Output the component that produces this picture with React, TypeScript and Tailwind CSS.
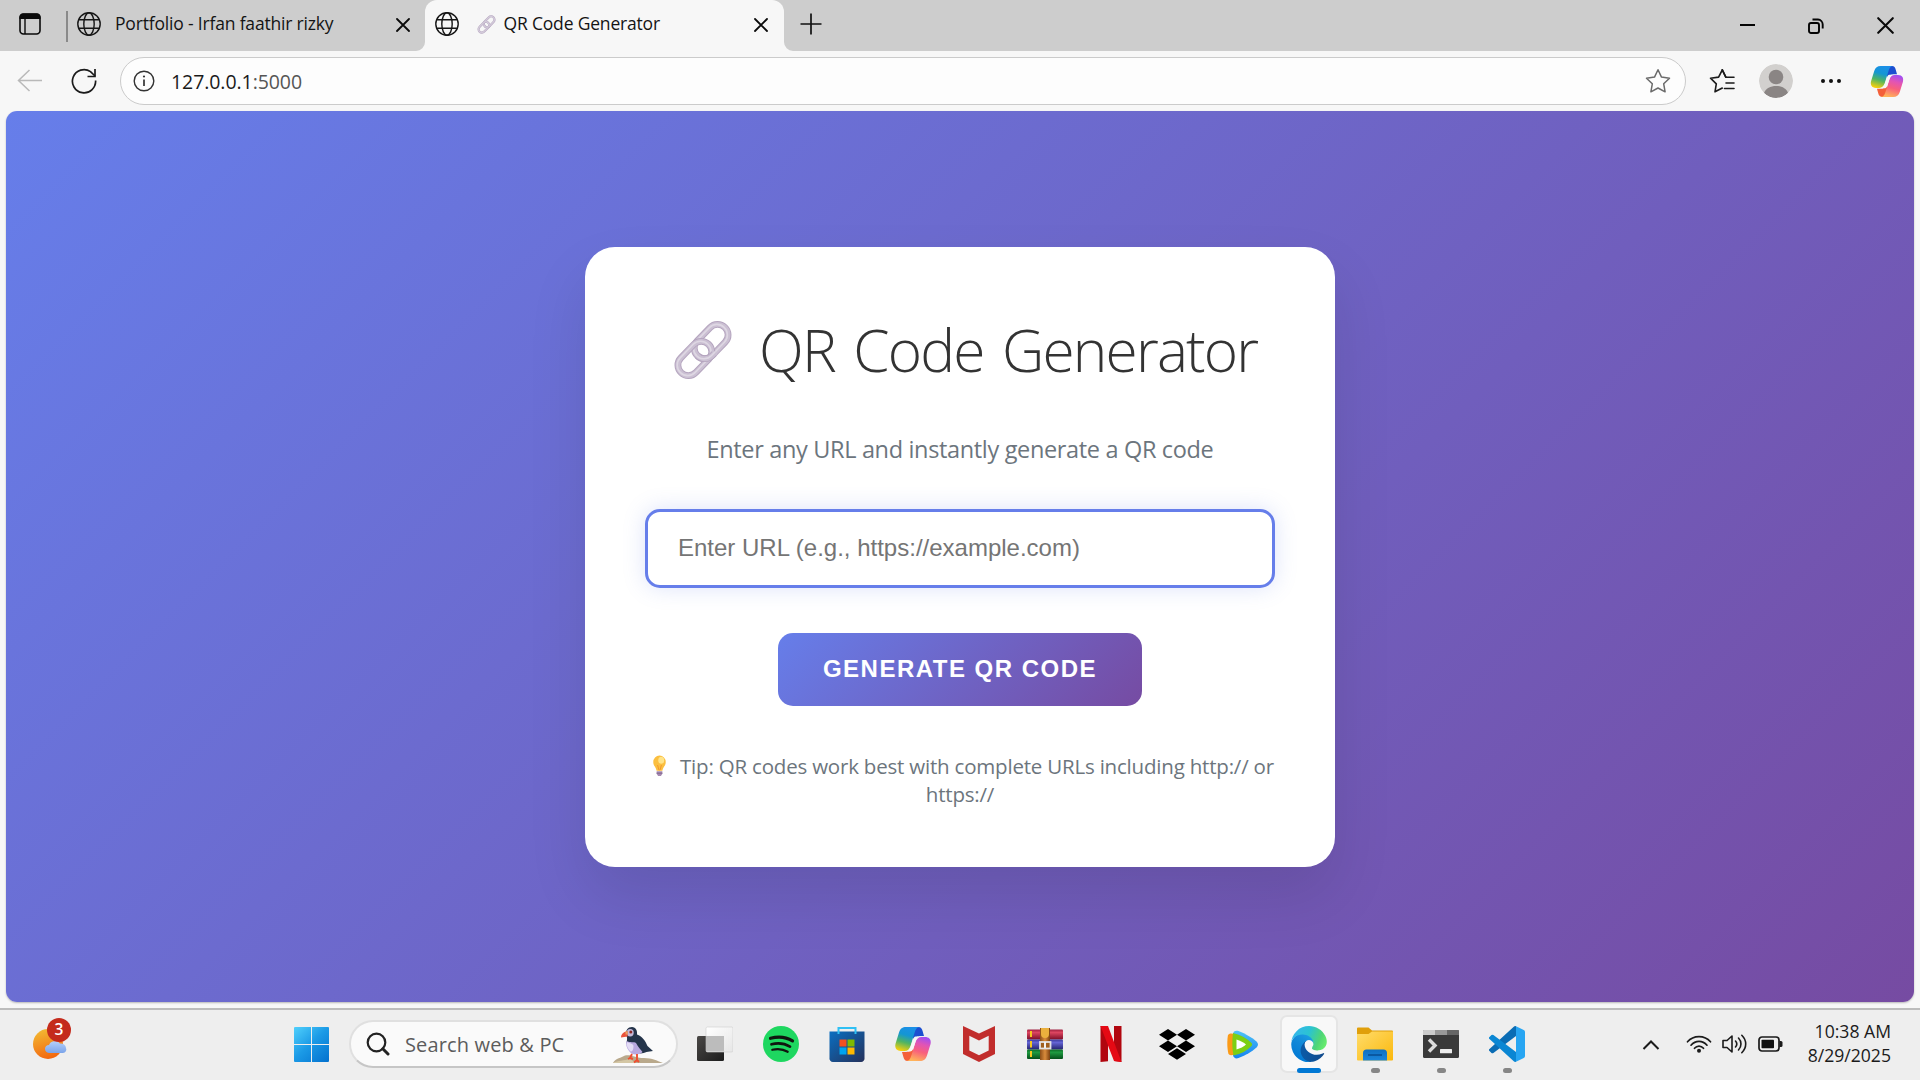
import React, { useId } from "react";

function Globe() {
  return (
    <svg className="h-6 w-6 shrink-0" viewBox="0 0 24 24" fill="none" stroke="#161616" strokeWidth="1.4">
      <circle cx="12" cy="12" r="11.2" />
      <ellipse cx="12" cy="12" rx="5.2" ry="11.2" />
      <path d="M2 7.7H22M2 16.3H22" />
    </svg>
  );
}

function Cross({ className, w = 1.8 }: { className: string; w?: number }) {
  return (
    <svg className={className} viewBox="0 0 14 14" fill="none" stroke="#0a0a0a" strokeWidth={w}>
      <path d="M1 1L13 13M13 1L1 13" strokeLinecap="round" />
    </svg>
  );
}

function LinkEmoji({ className }: { className: string }) {
  return (
    <svg className={className} viewBox="0 0 60 60" fill="none">
      <g transform="rotate(-46 30 30)">
        <rect x="22" y="19.5" width="39.5" height="21" rx="10.5" stroke="#b5a5bf" strokeWidth="6.8" />
        <rect x="22" y="19.5" width="39.5" height="21" rx="10.5" stroke="#cbc0d3" strokeWidth="4.8" />
        <rect x="21.5" y="19" width="39.5" height="21" rx="10.5" stroke="#ded7e3" strokeWidth="1.6" />
        <rect x="-1.5" y="19.5" width="39.5" height="21" rx="10.5" stroke="#b5a5bf" strokeWidth="6.8" />
        <rect x="-1.5" y="19.5" width="39.5" height="21" rx="10.5" stroke="#cbc0d3" strokeWidth="4.8" />
        <rect x="-2" y="19" width="39.5" height="21" rx="10.5" stroke="#ded7e3" strokeWidth="1.6" />
        <path d="M22 30A10.5 10.5 0 0 0 32.5 40.5H35" stroke="#b5a5bf" strokeWidth="6.8" />
        <path d="M22 29A10.5 10.5 0 0 0 32.5 40.5H37" stroke="#cbc0d3" strokeWidth="4.8" />
        <path d="M21.5 28A10.5 10.5 0 0 0 32 40H37" stroke="#ded7e3" strokeWidth="1.6" />
      </g>
    </svg>
  );
}

function Copilot({ className }: { className: string }) {
  const id = useId();
  const top = "M11 0H25C21.500 0 20.500 3 19.500 6L15.500 19C14.500 22 12.500 24 9.500 24H6C1 24-.5 20.500.6 16.500L4 5.500C5.200 1.600 7.500 0 11 0Z";
  const fold = "M18 0H23.500C26 0 27 1.800 27.600 4L29 9H26C22 9 20.500 10 19 13L17 9Z";
  return (
    <svg className={className} viewBox="0 0 36 34">
      <defs>
        <linearGradient id={id + "a"} x1="0.6" y1="0" x2="0.3" y2="1">
          <stop offset="0" stopColor="#1b8fe8" />
          <stop offset=".35" stopColor="#1496d3" />
          <stop offset=".65" stopColor="#4fb463" />
          <stop offset="1" stopColor="#f6cf0b" />
        </linearGradient>
        <linearGradient id={id + "b"} x1="0.6" y1="0" x2="0.3" y2="1">
          <stop offset="0" stopColor="#ffb45a" />
          <stop offset=".4" stopColor="#f8607c" />
          <stop offset=".7" stopColor="#e254b4" />
          <stop offset="1" stopColor="#a24ef2" />
        </linearGradient>
      </defs>
      <path d={fold} fill="#1c4fd0" />
      <path d={fold} fill="#f4603a" transform="rotate(180 18 17)" />
      <path d={top} fill={`url(#${id}a)`} />
      <path d={top} fill={`url(#${id}b)`} transform="rotate(180 18 17)" />
      <path d="M20.500 9.500H23.500C22 10.500 21.500 12 21 13.500L18.500 21C17.700 23.500 16.500 24.500 15 24.500H12.500C14 23.500 14.800 22 15.500 20L18 12.500C18.600 10.700 19.300 9.800 20.500 9.500Z" fill="#f7f7f7" />
    </svg>
  );
}

function TabStrip() {
  return (
    <div className="flex h-[51px] items-stretch bg-[#cdcdcd]">
      <div className="flex w-[425px] items-center pb-[3px]">
        <svg className="ml-[19px] h-[22px] w-[22px]" viewBox="0 0 22 22" fill="none">
          <rect x="1" y="1" width="20" height="20" rx="3.500" stroke="#0a0a0a" strokeWidth="1.600" />
          <path d="M.5 6V4A3.500 3.500 0 0 1 4 .5H18A3.500 3.500 0 0 1 21.500 4V6Z" fill="#0a0a0a" />
          <path d="M6 6V21" stroke="#0a0a0a" strokeWidth="1.400" />
        </svg>
        <div className="mt-[5px] ml-[25px] h-[31px] w-[2px] bg-[#8a8a8a]" />
        <div className="ml-[9px] flex">
          <Globe />
        </div>
        <span className="ml-[14px] flex-1 pb-[1px] text-[17.5px] tracking-[-0.18px] whitespace-nowrap text-[#141414]">Portfolio - Irfan faathir rizky</span>
        <Cross className="mt-[2px] mr-[15px] h-[14px] w-[14px]" />
      </div>
      <div className="relative flex w-[359px] items-center rounded-t-[12px] bg-[#f7f7f7] pb-[3px]">
        <svg className="absolute bottom-0 -left-[9px] h-[9px] w-[9px]" viewBox="0 0 9 9">
          <path d="M9 0V9H0A9 9 0 0 0 9 0Z" fill="#f7f7f7" />
        </svg>
        <svg className="absolute -right-[9px] bottom-0 h-[9px] w-[9px]" viewBox="0 0 9 9">
          <path d="M0 0V9H9A9 9 0 0 1 0 0Z" fill="#f7f7f7" />
        </svg>
        <div className="ml-[10px] flex">
          <Globe />
        </div>
        <LinkEmoji className="ml-[18px] h-[19px] w-[19px]" />
        <span className="ml-[7.5px] flex-1 pb-[1px] text-[17.5px] tracking-[-0.18px] whitespace-nowrap text-[#141414]">QR Code Generator</span>
        <Cross className="mt-[2px] mr-[16px] h-[14px] w-[14px]" />
      </div>
      <div className="flex flex-1 items-center pb-[2px]">
        <svg className="mb-[2px] ml-[16px] h-[22px] w-[22px]" viewBox="0 0 22 22" stroke="#111" strokeWidth="1.700">
          <path d="M11 .5V21.500M.5 11H21.500" />
        </svg>
        <div className="flex-1" />
        <div className="mr-[53px] h-[2px] w-[15px] bg-[#050505]" />
        <svg className="mt-[2px] mr-[53px] h-[16px] w-[16px]" viewBox="0 0 16 16" fill="none" stroke="#050505" strokeWidth="1.900">
          <rect x="1" y="5" width="10" height="10" rx="2" />
          <path d="M4.500 1.500H10A5 5 0 0 1 14.700 6.500V10.500" />
        </svg>
        <Cross className="mt-[2px] mr-[26px] h-[17px] w-[17px]" w={1.7} />
      </div>
    </div>
  );
}

function Toolbar() {
  return (
    <div className="flex h-[60px] items-center bg-[#f7f7f7]">
      <svg className="ml-[17px] h-[24px] w-[25px]" viewBox="0 0 25 24" fill="none" stroke="#b9b9b9" strokeWidth="1.500">
        <path d="M25 11.500H1.500M12.500 1L1.500 11.500L12.500 22" />
      </svg>
      <svg className="ml-[29px] h-[26px] w-[26px]" viewBox="0 0 26 26" fill="none" stroke="#1b1b1b" strokeWidth="1.700">
        <path d="M24.600 12.500A11.600 11.600 0 1 1 19.500 3.600L24 8" />
        <path d="M24 1V8.500H16.500" />
      </svg>
      <div className="ml-[23px] flex h-[48px] w-[1566px] items-center rounded-full border border-[#cbcbcb] bg-[#fdfdfd]">
        <svg className="ml-[12px] h-[22px] w-[22px]" viewBox="0 0 22 22" fill="none" stroke="#333" strokeWidth="1.400">
          <circle cx="11" cy="11" r="9.800" />
          <path d="M11 9.500V16" strokeWidth="1.700" />
          <circle cx="11" cy="6.500" r="1.100" fill="#333" stroke="none" />
        </svg>
        <span className="ml-[16px] flex-1 pt-[1px] text-[19.5px] tracking-[-0.07px] whitespace-nowrap text-[#1a1a1a]">
          127.0.0.1<span className="text-[#555]">:5000</span>
        </span>
        <svg className="mr-[14px] h-[26px] w-[26px]" viewBox="0 0 26 26" fill="none" stroke="#6b6b6b" strokeWidth="1.500" strokeLinejoin="round">
          <path d="M13 1.800L16.500 9.100L24.500 10.200L18.700 15.800L20.100 23.800L13 20L5.900 23.800L7.300 15.800L1.500 10.200L9.500 9.100Z" />
        </svg>
      </div>
      <svg className="ml-[23px] h-[26px] w-[26px]" viewBox="0 0 26 26" fill="none" stroke="#1b1b1b" strokeWidth="1.600" strokeLinejoin="round" strokeLinecap="round">
        <path d="M16.800 9.200L13.300 1.800L9.600 9.100L1.500 10.200L7.300 15.800L6 23.800L13.300 20" />
        <path d="M13.300 1.800L16.800 9.200H25M17 15H25M15.500 20.500H25" />
      </svg>
      <svg className="ml-[24px] h-[34px] w-[34px] rounded-full" viewBox="0 0 34 34">
        <circle cx="17" cy="17" r="17" fill="#d2d0ce" />
        <circle cx="17" cy="13" r="7.300" fill="#8a8584" />
        <path d="M5 29C8 19.500 26 19.500 29 29A17 17 0 0 1 5 29Z" fill="#8a8584" />
      </svg>
      <div className="ml-[28px] flex gap-[4px]">
        <i className="h-[4px] w-[4px] rounded-full bg-[#111]" />
        <i className="h-[4px] w-[4px] rounded-full bg-[#111]" />
        <i className="h-[4px] w-[4px] rounded-full bg-[#111]" />
      </div>
      <Copilot className="ml-[29px] h-[31px] w-[34px]" />
    </div>
  );
}

function Card() {
  return (
    <main className="mt-[136px] flex h-[620px] w-[750px] flex-col items-center rounded-[30px] bg-white px-[60px] pt-[60px] shadow-[0_30px_60px_rgba(0,0,0,0.1)]">
      <h1 className="flex h-[85px] w-full items-center gap-[26px] pl-[28px] text-[58.5px] font-light tracking-[-1.8px] whitespace-nowrap text-[#333] [word-spacing:5px]">
        <LinkEmoji className="h-[60px] w-[60px] shrink-0" />
        QR Code Generator
      </h1>
      <p className="mt-[39px] h-[36px] text-[23.5px] leading-[36px] tracking-[-0.34px] whitespace-nowrap text-[#6c757d]">Enter any URL and instantly generate a QR code</p>
      <input
        className="mt-[42px] h-[79px] w-[630px] rounded-[15px] border-[3px] border-[#667eea] bg-white px-[30px] pb-[2px] font-['Liberation_Sans',sans-serif] text-[24px] shadow-[0_0_22px_rgba(102,126,234,0.22)] outline-none placeholder:text-[#757575]"
        placeholder="Enter URL (e.g., https://example.com)"
      />
      <button className="mt-[45px] h-[73px] w-[364px] rounded-[15px] bg-[linear-gradient(135deg,#667eea_0%,#764ba2_100%)] pb-[2px] font-['Liberation_Sans',sans-serif] text-[24px] font-bold tracking-[1.5px] whitespace-nowrap text-white">
        GENERATE QR CODE
      </button>
      <div className="mt-[46px] w-full text-[20.5px] leading-[28px] tracking-[-0.2px] text-[#6c757d]">
        <p className="flex items-center whitespace-nowrap">
          <svg className="ml-[6px] h-[22px] w-[17px] shrink-0" viewBox="0 0 17 23">
            <path d="M8.500 .5A6.500 6.800 0 0 0 2 7.500C2 11 4.700 12.500 5.500 16.500H11.500C12.300 12.500 15 11 15 7.500A6.500 6.800 0 0 0 8.500 .5Z" fill="#fbbf3f" />
            <ellipse cx="10.300" cy="5.500" rx="3.100" ry="3.700" fill="#ffe48a" />
            <path d="M6.500 10.500L8 16M10.500 10.500L9 16" stroke="#f0942d" strokeWidth="1" fill="none" />
            <path d="M5.500 17H11.500V19.500L10 22H7L5.500 19.500Z" fill="#a58ab0" />
            <path d="M5.500 19H11.500" stroke="#7d6490" strokeWidth="1" />
          </svg>
          <span className="ml-[12px]">Tip: QR codes work best with complete URLs including http:// or</span>
        </p>
        <p className="text-center">https://</p>
      </div>
    </main>
  );
}

function Puffin() {
  return (
    <svg className="h-[38px] w-[52px]" viewBox="0 0 52 38">
      <path d="M1 37C4 32 9 32 13 29.500C19 28 24 32 32 32C40 32 46 35 51 37Z" fill="#b9a98c" />
      <path d="M1 37C6 34 12 35 18 33L24 37Z" fill="#d4c7a5" />
      <path d="M14.500 10C13 4 16 1 20 1C24 1 25.500 5 25 8.500C30 10 33.500 15 35.500 20L41 25L34.500 26C32 27 29 28 26 27L15 18C14 16 16 13 14.500 10Z" fill="#24344a" />
      <path d="M14.500 15C18 17 22 15.500 24 17C26 21 29 24 30.500 26C28 29 20 30 17 25C14.500 22 13.500 18 14.500 15Z" fill="#b9a9e0" />
      <path d="M15 16C18 18 21 17 21.500 20C21.500 24 20 26 18.500 25.500C15.500 22.500 14 19 15 16Z" fill="#e3dcf5" />
      <ellipse cx="18.200" cy="6.700" rx="3.500" ry="3.700" fill="#c3b8d8" />
      <circle cx="18.800" cy="6" r="1.500" fill="#8b2b28" />
      <path d="M15.500 5C11 6 9 8.500 9 11.500L15.500 10.500Z" fill="#e9533c" />
      <path d="M15.500 5L13.500 5.800V8.500L15.500 8.500Z" fill="#e9a25c" />
      <path d="M20 28L18 32L16 33M18 32L21 33M25 28L25 34L22 36.500M25 34L27 36" stroke="#ee4f32" strokeWidth="1.900" fill="none" />
    </svg>
  );
}

function TaskView() {
  return (
    <svg className="h-[36px] w-[36px]" viewBox="0 0 36 36">
      <defs>
        <linearGradient id="tv" x1="0" y1="0" x2="1" y2="1">
          <stop offset="0" stopColor="#4a4846" />
          <stop offset="1" stopColor="#1c1c1c" />
        </linearGradient>
        <linearGradient id="tw" x1="0" y1="0" x2="1" y2="1">
          <stop offset="0" stopColor="#fff" />
          <stop offset="1" stopColor="#e6e6e6" />
        </linearGradient>
      </defs>
      <rect x="0" y="10" width="27" height="25" rx="1.500" fill="url(#tv)" />
      <rect x="9" y="1" width="27" height="25" rx="1.500" fill="url(#tw)" stroke="#cfcfcf" strokeWidth=".6" />
      <path d="M9 10H27V25.500H10A1 1 0 0 1 9 24.500Z" fill="#bcbcbc" />
    </svg>
  );
}

function Spotify() {
  return (
    <svg className="h-[36px] w-[36px]" viewBox="0 0 36 36" fill="none" stroke="#10150f" strokeLinecap="round">
      <circle cx="18" cy="18" r="18" fill="#1ed760" stroke="none" />
      <path d="M7.500 12.300C15 10.300 23.500 11.200 29.500 14.900" strokeWidth="3.200" />
      <path d="M8.500 18.300C15 16.500 21.500 17.300 27 20.600" strokeWidth="2.700" />
      <path d="M9.300 23.800C15 22.500 20 23 24.700 25.800" strokeWidth="2.200" />
    </svg>
  );
}

function Store() {
  return (
    <svg className="h-[36px] w-[36px]" viewBox="0 0 36 36">
      <defs>
        <linearGradient id="st" x1="0" y1="0" x2="1" y2="1">
          <stop offset="0" stopColor="#0a6fc2" />
          <stop offset="1" stopColor="#25315b" />
        </linearGradient>
      </defs>
      <path d="M.5 5.500H35.500V32A3.500 3.500 0 0 1 32 36H4A3.500 3.500 0 0 1 .5 32Z" fill="url(#st)" />
      <path d="M9.500 8V2H26.500V8" fill="none" stroke="#2fc0f4" strokeWidth="2" />
      <path d="M10.500 13.500H17.500V20.500H10.500Z" fill="#f25022" />
      <path d="M18.500 13.500H25.500V20.500H18.500Z" fill="#7fba00" />
      <path d="M10.500 21.500H17.500V28.500H10.500Z" fill="#00a4ef" />
      <path d="M18.500 21.500H25.500V28.500H18.500Z" fill="#ffb900" />
    </svg>
  );
}

function McAfee() {
  return (
    <svg className="h-[36px] w-[32px]" viewBox="0 0 32 36">
      <path d="M0 0L16 7.500L32 0V28L16 36L0 28ZM6.300 9.700V24.500L16 29.200L25.700 24.500V9.700L16 14.500Z" fill="#c12d2c" fillRule="evenodd" />
    </svg>
  );
}

function WinRar() {
  return (
    <svg className="h-[32px] w-[36px]" viewBox="0 0 36 32">
      <defs>
        <linearGradient id="w1" x1="0" y1="0" x2="0" y2="1">
          <stop offset="0" stopColor="#a02040" />
          <stop offset=".3" stopColor="#dc4560" />
          <stop offset="1" stopColor="#7d0e28" />
        </linearGradient>
        <linearGradient id="w2" x1="0" y1="0" x2="0" y2="1">
          <stop offset="0" stopColor="#3a3a9c" />
          <stop offset=".3" stopColor="#6464d4" />
          <stop offset="1" stopColor="#24246f" />
        </linearGradient>
        <linearGradient id="w3" x1="0" y1="0" x2="0" y2="1">
          <stop offset="0" stopColor="#0c6a26" />
          <stop offset=".3" stopColor="#1e9a40" />
          <stop offset="1" stopColor="#05501a" />
        </linearGradient>
        <linearGradient id="w4" x1="0" y1="0" x2="1" y2="0">
          <stop offset="0" stopColor="#8c4e17" />
          <stop offset=".5" stopColor="#d98c3c" />
          <stop offset="1" stopColor="#7a4010" />
        </linearGradient>
      </defs>
      <rect x="0" y="1.500" width="36" height="10" rx="1" fill="url(#w1)" />
      <rect x="0" y="11.500" width="36" height="10" rx="1" fill="url(#w2)" />
      <rect x="0" y="21.500" width="36" height="9.500" rx="1" fill="url(#w3)" />
      <path d="M3 3H5V9H3ZM3 13H5V19.500H3ZM3 23H5V29H3Z" fill="#f6c71d" />
      <rect x="13" y="0" width="10" height="32" fill="url(#w4)" />
      <path d="M14 0H22V6A4 4 0 0 1 14 6Z" fill="#eab03d" />
      <rect x="13" y="14" width="10.500" height="6.500" fill="#a1601f" stroke="#e4e4e4" strokeWidth="1.800" />
      <path d="M18 14V20" stroke="#f2f2f2" strokeWidth="2" />
    </svg>
  );
}

function Netflix() {
  return (
    <svg className="h-[36px] w-[22px]" viewBox="0 0 22 36">
      <path d="M.5 0H8V35.300L.5 36ZM14 0H21.500V36L14 35Z" fill="#b1060f" />
      <path d="M.5 0H8L21.500 36C19 35.500 16.500 35.200 14 35Z" fill="#e50914" />
    </svg>
  );
}

function Dropbox() {
  return (
    <svg className="h-[31px] w-[36px]" viewBox="0 0 36 31" fill="#000">
      <path d="M9 0L18 5.700L9 11.400L0 5.700ZM27 0L36 5.700L27 11.400L18 5.700ZM9 11.600L18 17.300L9 23L0 17.300ZM27 11.600L36 17.300L27 23L18 17.300ZM18 19.300L27 25L18 30.700L9 25Z" />
    </svg>
  );
}

function TencentVideo() {
  return (
    <svg className="h-[29px] w-[32px]" viewBox="0 0 32 29">
      <defs>
        <linearGradient id="tc" x1="0" y1="0" x2="0" y2="1">
          <stop offset="0" stopColor="#4fc3f7" />
          <stop offset="1" stopColor="#1583f0" />
        </linearGradient>
      </defs>
      <path d="M6 4C6 1 9 0 11.500 1C19 4 25 7.500 29.500 11.500C31.500 13.500 31.500 15.500 29.500 17.500C25 21.500 19 25 11.500 28C9 29 6.500 28 6 25Z" fill="url(#tc)" />
      <path d="M1 5C3 3 5 3.500 7 4V24.500C5 25.500 3 25.500 1.500 24C0 18 0 10 1 5Z" fill="#fb9a17" />
      <path d="M6 3C14 5 20 8.500 24.500 13C25.300 14 25.300 15 24.500 16C20 20.500 14 24 6.500 25.500C5 18 5 11 6 3Z" fill="#7ccf13" />
      <path d="M9.500 9.500C13 10.500 17 12.500 19 14.500C17 16.500 13 18.500 9.500 19.500Z" fill="#fff" />
    </svg>
  );
}

function Edge() {
  return (
    <svg className="h-[36px] w-[36px]" viewBox="4 0 257 259">
      <defs>
        <linearGradient id="e1" x1=".2" y1="0" x2="1" y2="0">
          <stop offset="0" stopColor="#0c59a4" />
          <stop offset="1" stopColor="#114a8b" />
        </linearGradient>
        <linearGradient id="e2" x1=".8" y1=".1" x2=".3" y2="1">
          <stop offset="0" stopColor="#1b9de2" />
          <stop offset=".4" stopColor="#1188d8" />
          <stop offset="1" stopColor="#0078d4" />
        </linearGradient>
        <linearGradient id="e3" x1="0" y1=".3" x2="1" y2=".6">
          <stop offset="0" stopColor="#35b5ee" />
          <stop offset=".45" stopColor="#2bc3d2" />
          <stop offset=".8" stopColor="#4fd675" />
          <stop offset="1" stopColor="#66eb6e" />
        </linearGradient>
      </defs>
      <path d="M235.680 195.460a93.730 93.730 0 01-10.540 4.710 101.870 101.870 0 01-35.900 6.460c-47.320 0-88.540-32.550-88.540-74.320A31.480 31.480 0 01117.130 105c-42.800 1.800-53.800 46.400-53.800 72.530 0 73.880 68.090 81.370 82.760 81.370 7.910 0 19.840-2.300 27-4.560l1.310-.44a128.340 128.340 0 0066.600-52.800 4 4 0 00-5.320-5.640z" fill="url(#e1)" />
      <path d="M110.340 246.340A79.200 79.200 0 0187.600 225a80.720 80.720 0 0129.530-120c3.120-1.470 8.450-4.130 15.540-4a32.350 32.350 0 0125.690 13 31.880 31.880 0 016.360 18.660c0-.21 24.460-79.600-80-79.600-43.900 0-80 41.660-80 78.210a130.150 130.150 0 0012.110 56 128 128 0 00156.380 67.110 75.550 75.550 0 01-62.780-8z" fill="url(#e2)" />
      <path d="M156.940 153.750c-.81 1.050-3.300 2.500-3.300 5.660 0 2.610 1.700 5.120 4.720 7.230 14.380 10 41.490 8.680 41.560 8.680a59.560 59.560 0 0030.270-8.350 61.380 61.380 0 0030.430-52.880c.26-22.410-8-37.310-11.340-43.910C228.090 28.760 182.350.25 132.610.25a128 128 0 00-128 126.200c.48-36.540 36.800-66.050 80-66.050 3.500 0 23.460.34 42 10.070 16.340 8.580 24.900 18.940 30.850 29.210 6.180 10.670 7.280 24.150 7.280 29.520s-2.740 13.330-7.800 19.550z" fill="url(#e3)" />
    </svg>
  );
}

function Folder() {
  return (
    <svg className="h-[34px] w-[36px]" viewBox="0 0 36 34">
      <defs>
        <linearGradient id="fo" x1="0" y1="0" x2="1" y2="1">
          <stop offset="0" stopColor="#ffdc6b" />
          <stop offset="1" stopColor="#fbb80c" />
        </linearGradient>
        <linearGradient id="fb" x1="0" y1="0" x2="0" y2="1">
          <stop offset="0" stopColor="#0f6fc0" />
          <stop offset="1" stopColor="#1b86dc" />
        </linearGradient>
      </defs>
      <path d="M0 1.500A1 1 0 0 1 1 .5H11.500L15 3.500H35A1 1 0 0 1 36 4.500V12H0Z" fill="#e09f0b" />
      <path d="M0 7H11.500L15 4.500H36V32A1 1 0 0 1 35 33.500H1A1 1 0 0 1 0 32Z" fill="url(#fo)" />
      <path d="M6 33.500V26A3.500 3.500 0 0 1 9.500 22.500H26.500A3.500 3.500 0 0 1 30 26V33.500Z" fill="url(#fb)" />
      <path d="M11 28H25" stroke="#0a559c" strokeWidth="1.800" />
    </svg>
  );
}

function Terminal() {
  return (
    <svg className="h-[28px] w-[36px]" viewBox="0 0 36 28">
      <rect width="36" height="28" rx="1.500" fill="#3a3a3a" />
      <path d="M1 0H12V5H0V1A1 1 0 0 1 1 0Z" fill="#cccccc" />
      <path d="M12 0H24V5H12Z" fill="#999" />
      <path d="M24 0H35A1 1 0 0 1 36 1V5H24Z" fill="#666" />
      <path d="M6 9.500L12 15.500L6 21.500" stroke="#dcdcdc" strokeWidth="3.400" fill="none" />
      <rect x="17" y="19" width="12" height="4.200" rx=".5" fill="#ededed" />
    </svg>
  );
}

function VsCode() {
  return (
    <svg className="h-[36px] w-[36px]" viewBox="0 0 24 24">
      <defs>
        <clipPath id="vl">
          <path d="M0 0H18V24H0Z" />
        </clipPath>
      </defs>
      <g clipPath="url(#vl)">
        <path d="M.330 15.260L16.500.5A1.500 1.500 0 0 1 18.210.21V6.550L2.930 18A1 1 0 0 1 1.650 17.940L.33 16.740A1 1 0 0 1 .33 15.260Z" fill="#0a6cb4" />
        <path d="M.330 8.740L16.500 23.500A1.500 1.500 0 0 0 18.210 23.790V17.450L2.930 6A1 1 0 0 0 1.650 6.060L.33 7.260A1 1 0 0 0 .33 8.740Z" fill="#0a86d3" />
      </g>
      <path d="M18 .2L23.150 2.590A1.500 1.500 0 0 1 24 3.940V20.060A1.500 1.500 0 0 1 23.150 21.410L18 23.850Z" fill="#27a5f2" />
    </svg>
  );
}

const apps: { icon: React.ReactNode; state?: "active" | "open" }[] = [
  { icon: <TaskView /> },
  { icon: <Spotify /> },
  { icon: <Store /> },
  { icon: <Copilot className="h-[34px] w-[36px]" /> },
  { icon: <McAfee /> },
  { icon: <WinRar /> },
  { icon: <Netflix /> },
  { icon: <Dropbox /> },
  { icon: <TencentVideo /> },
  { icon: <Edge />, state: "active" },
  { icon: <Folder />, state: "open" },
  { icon: <Terminal />, state: "open" },
  { icon: <VsCode />, state: "open" },
];

function Taskbar() {
  return (
    <div className="flex h-[72px] items-center border-t-2 border-[#bcbcbc] bg-[#eeeeee]">
      <div className="relative ml-[33px] h-[36px] w-[38px]">
        <svg className="h-[36px] w-[38px]" viewBox="0 0 38 36">
          <defs>
            <linearGradient id="su" x1=".3" y1="0" x2=".6" y2="1">
              <stop offset="0" stopColor="#f3b932" />
              <stop offset="1" stopColor="#f2650f" />
            </linearGradient>
            <linearGradient id="cl" x1="0" y1="0" x2="0" y2="1">
              <stop offset="0" stopColor="#b4d0fb" />
              <stop offset="1" stopColor="#7ba4ea" />
            </linearGradient>
          </defs>
          <circle cx="15" cy="17" r="15" fill="url(#su)" />
          <path d="M16 26A5 4.500 0 0 1 12 21.500A4 4 0 0 1 16 18A6 5 0 0 1 27 16.500A5 5 0 0 1 33 21A3.500 3.500 0 0 1 30 26Z" fill="url(#cl)" />
        </svg>
        <span className="absolute -top-[9px] left-[14px] flex h-[24px] w-[24px] items-center justify-center rounded-full bg-[#c42b1c] text-[15.5px] leading-none font-semibold text-white">3</span>
      </div>
      <svg className="mb-[1px] ml-[223px] h-[35px] w-[35px]" viewBox="0 0 35 35">
        <defs>
          <linearGradient id="wn" gradientUnits="userSpaceOnUse" x1="0" y1="0" x2="32" y2="35">
            <stop offset="0" stopColor="#50d0fc" />
            <stop offset=".5" stopColor="#1b9ae6" />
            <stop offset="1" stopColor="#0574d0" />
          </linearGradient>
        </defs>
        <path d="M1 0H17V17H0V1A1 1 0 0 1 1 0ZM18 0H34A1 1 0 0 1 35 1V17H18ZM0 18H17V35H1A1 1 0 0 1 0 34ZM18 18H35V34A1 1 0 0 1 34 35H18Z" fill="url(#wn)" />
      </svg>
      <div className="mb-[2px] ml-[20px] flex h-[48px] w-[329px] items-center rounded-full border-2 border-[#e0e0e0] border-b-[#c6c6c6] bg-[#fafafa]">
        <svg className="ml-[15px] h-[24px] w-[24px]" viewBox="0 0 24 24" fill="none" stroke="#222">
          <circle cx="10.500" cy="10.500" r="8.800" strokeWidth="2.200" />
          <path d="M16.800 16.800L22 22" strokeWidth="3" strokeLinecap="round" />
        </svg>
        <span className="ml-[15px] flex-1 pt-[2px] text-[20px] tracking-[0.15px] whitespace-nowrap text-[#5c5c5c]">Search web &amp; PC</span>
        <div className="mr-[12px] pt-[2px]">
          <Puffin />
        </div>
      </div>
      <div className="ml-[4px] flex h-full">
        {apps.map((a, i) => (
          <div key={i} className="relative flex w-[66px] items-center justify-center">
            {a.state === "active" && <div className="absolute top-[5px] left-[4px] h-[58px] w-[58px] rounded-[7px] border-2 border-[#e5e5e5] bg-[#f8f8f8]" />}
            <div className="relative -top-[1px] flex">{a.icon}</div>
            {a.state === "active" && <div className="absolute top-[58px] h-[5px] w-[24px] rounded-full bg-[#0078d4]" />}
            {a.state === "open" && <div className="absolute top-[58px] h-[5px] w-[9px] rounded-full bg-[#868686]" />}
          </div>
        ))}
      </div>
      <div className="flex-1" />
      <svg className="mr-[26px] mb-[1px] h-[10px] w-[18px]" viewBox="0 0 18 10" fill="none" stroke="#1b1b1b" strokeWidth="2">
        <path d="M1.500 9L9 1.500L16.500 9" />
      </svg>
      <svg className="mr-[10px] mb-[2px] h-[18px] w-[26px]" viewBox="0 0 26 18" fill="none" stroke="#1b1b1b" strokeWidth="1.700" strokeLinecap="round">
        <path d="M1.500 6.800C7.500-.2 18.500-.2 24.500 6.800M5 10.200C9.500 5 16.500 5 21 10.200M8.500 13.300C11 10.300 15 10.300 17.500 13.300" />
        <circle cx="13" cy="15.800" r="2" fill="#1b1b1b" stroke="none" />
      </svg>
      <svg className="mr-[11px] mb-[2px] h-[20px] w-[25px]" viewBox="0 0 25 20" fill="none" stroke="#1b1b1b" strokeWidth="1.600" strokeLinejoin="round" strokeLinecap="round">
        <path d="M1 6.500H5L10 2V18L5 13.500H1ZM13.500 7C15 8.700 15 11.300 13.500 13M16.500 4C19.800 7.500 19.800 12.500 16.500 16M19.800 1.300C25 6.500 25 13.500 19.800 18.700" />
      </svg>
      <svg className="mr-[25px] mb-[2px] h-[16px] w-[25px]" viewBox="0 0 25 16">
        <rect x="1" y="1" width="20" height="14" rx="3" fill="none" stroke="#1b1b1b" strokeWidth="1.700" />
        <rect x="3.500" y="3.700" width="12.500" height="8.600" rx=".8" fill="#111" />
        <path d="M21.500 5H23A1.500 1.500 0 0 1 24.500 6.500V9.500A1.500 1.500 0 0 1 23 11H21.500Z" fill="#1b1b1b" />
      </svg>
      <div className="mr-[29px] pb-[4px] text-right text-[17.6px] leading-[24px] text-[#1b1b1b]">
        <div>10:38 AM</div>
        <div>8/29/2025</div>
      </div>
    </div>
  );
}

export default function App() {
  return (
    <div className="flex h-[1080px] w-[1920px] flex-col overflow-hidden bg-[#f7f7f7] font-['Open_Sans','Noto_Sans',sans-serif]">
      <TabStrip />
      <Toolbar />
      <div className="mx-[6px] mb-[6px] flex h-[891px] justify-center rounded-[11px] bg-[linear-gradient(135deg,#667eea_0%,#764ba2_100%)] shadow-[0_1px_2px_rgba(0,0,0,0.25)]">
        <Card />
      </div>
      <Taskbar />
    </div>
  );
}
